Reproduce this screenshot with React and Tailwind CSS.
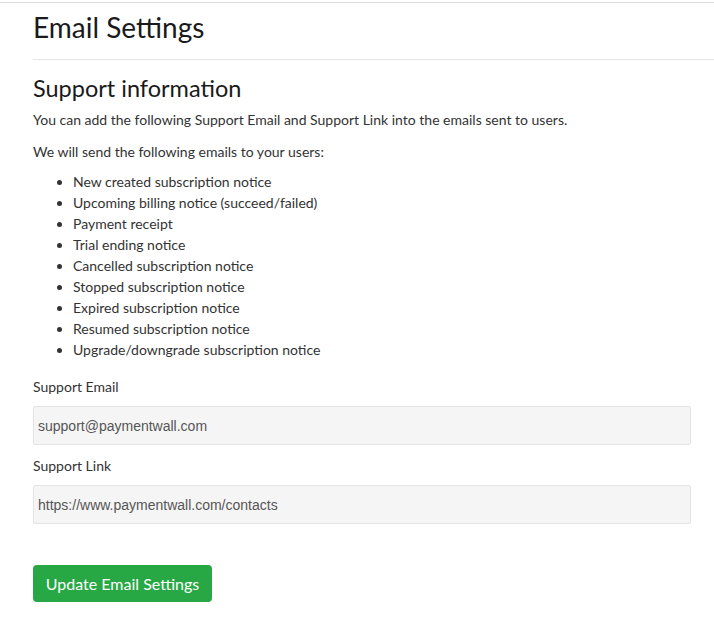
export default function App() {
	const notices = [
		"New created subscription notice",
		"Upcoming billing notice (succeed/failed)",
		"Payment receipt",
		"Trial ending notice",
		"Cancelled subscription notice",
		"Stopped subscription notice",
		"Expired subscription notice",
		"Resumed subscription notice",
		"Upgrade/downgrade subscription notice",
	];

	return (
		<div className="min-h-[626px] bg-white font-['Lato','Noto_Sans',sans-serif] text-[#333]">
			<div className="mt-[2px] border-t border-[#dddddd]">
				<div className="pl-[33px]">
					{/* 페이지 제목 */}
					<h1 className="pt-[9px] text-[28px] leading-[30px] text-[#1a1a1a]">Email Settings</h1>
					<div className="mt-[17px] border-t border-[#e5e5e5]" />

					{/* 지원 정보 */}
					<div className="pr-[23px]">
						<h2 className="mt-[14px] text-[23.5px] leading-[28px] text-[#1a1a1a]">Support information</h2>
						<p className="mt-[8px] text-[14px] leading-[20px]">
							You can add the following Support Email and Support Link into the emails sent to users.
						</p>
						<p className="mt-[12px] text-[14px] leading-[20px]">We will send the following emails to your users:</p>
						<ul className="mt-[9px] list-disc pl-[40px] text-[14px] leading-[21px]">
							{notices.map((n) => (
								<li key={n}>{n}</li>
							))}
						</ul>

						<label className="mt-[17px] block text-[14px] leading-[20px]">Support Email</label>
						<input
							type="text"
							readOnly
							value="support@paymentwall.com"
							className="mt-[9px] block h-[39px] w-full rounded-[2px] border border-[#e3e3e3] bg-[#f5f5f5] px-[4px] font-['Liberation_Sans',Arial,sans-serif] text-[14px] text-[#555] outline-none"
						/>

						<label className="mt-[11px] block text-[14px] leading-[20px]">Support Link</label>
						<input
							type="text"
							readOnly
							value="https://www.paymentwall.com/contacts"
							className="mt-[9px] block h-[39px] w-full rounded-[2px] border border-[#e3e3e3] bg-[#f5f5f5] px-[4px] font-['Liberation_Sans',Arial,sans-serif] text-[14px] text-[#555] outline-none"
						/>

						<button
							type="button"
							className="mt-[41px] block h-[37px] w-[179px] rounded-[4px] bg-[#28a745] text-[16px] text-white"
						>
							Update Email Settings
						</button>
					</div>
				</div>
			</div>
		</div>
	);
}
